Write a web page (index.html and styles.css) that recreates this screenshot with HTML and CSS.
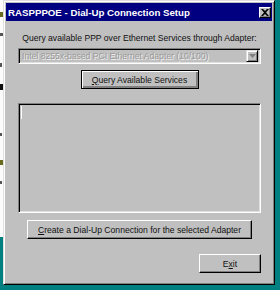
FILE: index.html
```html
<!DOCTYPE html>
<html lang="en">
<head>
    <meta charset="UTF-8">
    <title>RASPPPOE - Dial-Up Connection Setup</title>
    <link rel="stylesheet" href="styles.css">
</head>
<body>
    <div class="desktop">
        <div class="behind">
            <span class="mark m1"></span>
            <span class="mark m2"></span>
            <span class="mark m3"></span>
            <span class="mark m4"></span>
            <span class="mark m5"></span>
            <span class="mark m6"></span>
            <span class="mark m7"></span>
        </div>

        <div class="dialog">
            <div class="titlebar">
                <span class="title">RASPPPOE - Dial-Up Connection Setup</span>
                <span class="close">
                    <svg width="8" height="7" viewBox="0 0 8 7">
                        <path d="M0 0h2l2 2 2-2h2L5 3.5 8 7H6L4 5 2 7H0l3-3.5z" fill="#000"/>
                    </svg>
                </span>
            </div>

            <div class="client">
                <div class="label">Query available PPP over Ethernet Services through Adapter:</div>

                <div class="combo">
                    <span class="combo-text">Intel 8255x-based PCI Ethernet Adapter (10/100)</span>
                    <span class="combo-btn">
                        <svg width="7" height="4" viewBox="0 0 7 4">
                            <path d="M0 0h7L3.5 4z" fill="#808080"/>
                        </svg>
                    </span>
                </div>

                <div class="row center">
                    <button class="btn default query"><u>Q</u>uery Available Services</button>
                </div>

                <div class="list">
                    <span class="caret"></span>
                </div>

                <div class="row center">
                    <button class="btn create"><u>C</u>reate a Dial-Up Connection for the selected Adapter</button>
                </div>

                <div class="row right">
                    <button class="btn exit">E<u>x</u>it</button>
                </div>
            </div>
        </div>
    </div>
</body>
</html>
```

FILE: styles.css
```css
body {
    margin: 0;
    background-color: #008080;
    font-family: "Liberation Sans", Arial, sans-serif;
    overflow: hidden;
}
.desktop {
    position: relative;
    width: 280px;
    height: 290px;
}
.behind {
    position: absolute;
    left: 0;
    top: 0;
    width: 238px;
    height: 237px;
    background-color: #fbfbfb;
    overflow: hidden;
}
.mark {
    position: absolute;
    left: 0;
    width: 3px;
    height: 4px;
    background-color: #555;
}
.m1 { top: 12px; background-color: #6b6b20; height: 5px; }
.m2 { top: 33px; height: 3px; }
.m3 { top: 63px; width: 2px; }
.m4 { top: 84px; height: 6px; background-color: #111; }
.m5 { top: 133px; width: 2px; height: 3px; }
.m6 { top: 160px; background-color: #6b6b20; height: 5px; }
.m7 { top: 181px; width: 2px; height: 3px; }

.dialog {
    position: absolute;
    left: 3px;
    top: 0;
    width: 272px;
    height: 285px;
    box-sizing: border-box;
    padding: 2px;
    background-color: #c0c0c0;
    border: 1px solid;
    border-color: #dfdfdf #000 #000 #dfdfdf;
    box-shadow: inset 1px 1px #fff, inset -1px -1px #808080;
    display: flex;
    flex-direction: column;
}
.titlebar {
    height: 18px;
    background-color: #000080;
    display: flex;
    align-items: center;
    justify-content: space-between;
    padding: 0 1px 0 2px;
}
.title {
    color: #fff;
    font-weight: bold;
    font-size: 9.7px;
    white-space: nowrap;
}
.close {
    width: 12px;
    height: 11px;
    box-sizing: border-box;
    background-color: #c0c0c0;
    border: 1px solid;
    border-color: #fff #000 #000 #fff;
    box-shadow: inset -1px -1px #808080;
    display: flex;
    align-items: center;
    justify-content: center;
}
.client {
    display: flex;
    flex-direction: column;
    padding: 0 11px 0 12px;
    font-size: 8.6px;
    color: #000;
}
.label {
    margin-top: 12px;
    height: 10px;
    line-height: 10px;
    text-align: center;
    white-space: nowrap;
    color: #111;
}
.combo {
    margin-top: 5px;
    height: 16px;
    box-sizing: border-box;
    border: 1px solid;
    border-color: #808080 #fff #fff #808080;
    box-shadow: inset 1px 1px #000, inset -1px -1px #dfdfdf;
    display: flex;
    align-items: center;
    justify-content: space-between;
    padding: 2px;
}
.combo-text {
    color: #9a9a9a;
    text-shadow: 1px 1px #f0f0f0;
    padding-left: 1px;
    white-space: nowrap;
}
.combo-btn {
    width: 12px;
    height: 12px;
    box-sizing: border-box;
    border: 1px solid;
    border-color: #dfdfdf #000 #000 #dfdfdf;
    box-shadow: inset 1px 1px #fff, inset -1px -1px #808080;
    display: flex;
    align-items: center;
    justify-content: center;
}
.row {
    display: flex;
}
.center {
    justify-content: center;
}
.right {
    justify-content: flex-end;
}
.btn {
    font-family: "Liberation Sans", Arial, sans-serif;
    font-size: 8.6px;
    color: #111;
    height: 19px;
    padding: 0;
    background-color: #c0c0c0;
    border: 1px solid;
    border-color: #fff #000 #000 #fff;
    box-shadow: inset -1px -1px #808080;
    white-space: nowrap;
}
.btn.default {
    border-color: #000;
    box-shadow: inset 1px 1px #fff, inset -2px -2px #808080;
}
.query {
    margin-top: 6px;
    width: 118px;
}
.list {
    position: relative;
    margin-top: 14px;
    height: 110px;
    box-sizing: border-box;
    border: 1px solid;
    border-color: #808080 #fff #fff #808080;
    box-shadow: inset 1px 1px #000, inset -1px -1px #dfdfdf;
}
.caret {
    position: absolute;
    left: 2px;
    top: 2px;
    width: 1px;
    height: 13px;
    background-color: #fff;
}
.create {
    margin-top: 7px;
    width: 225px;
}
.exit {
    margin-top: 15px;
    width: 62px;
}
```
